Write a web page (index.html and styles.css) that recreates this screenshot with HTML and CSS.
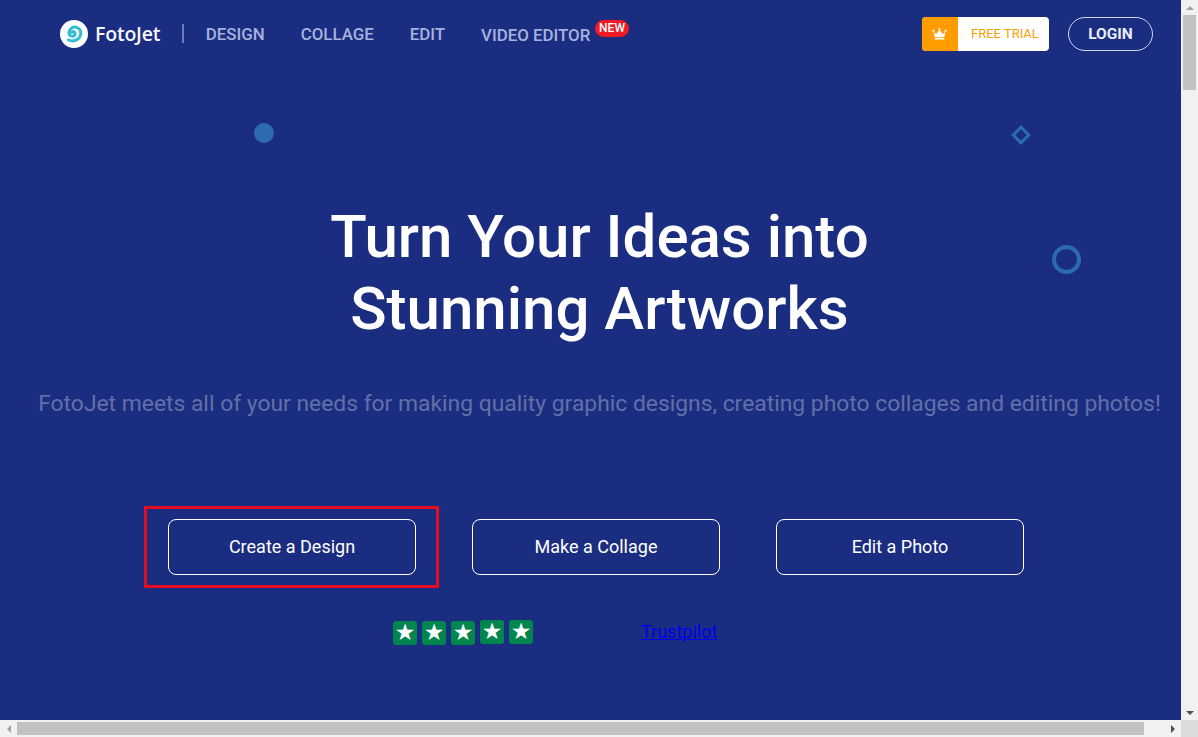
FILE: index.html
```html
<!DOCTYPE html>
<html lang="en">
<head>
<meta charset="utf-8">
<title>FotoJet</title>
<link rel="stylesheet" href="styles.css">
</head>
<body>
<div class="window">
  <div class="viewport">
    <main class="page">
      <header class="nav">
        <a class="brand">
          <svg class="brand-mark" viewBox="0 0 28 28" width="28" height="28" aria-hidden="true">
            <circle cx="14" cy="14" r="14" fill="#fff"/>
            <path d="M8.5 20 C14 22.8 21.2 18.8 20.8 12.5 C20.4 8 15.4 5.8 11.6 8 C8.4 10 8.2 14.6 11 16 C13.5 17.1 15.8 14.8 15 12.8 C14.5 11.6 13 11.2 12 12.2" fill="none" stroke="#34bccf" stroke-width="3" stroke-linecap="round"/>
          </svg>
          <span class="brand-name">FotoJet</span>
        </a>
        <span class="nav-divider"></span>
        <nav class="nav-links">
          <a class="nav-link">DESIGN</a>
          <a class="nav-link">COLLAGE</a>
          <a class="nav-link">EDIT</a>
          <a class="nav-link nav-link-video">VIDEO EDITOR<span class="badge-new">NEW</span></a>
        </nav>
        <div class="nav-actions">
          <a class="trial">
            <span class="trial-icon">
              <svg viewBox="0 0 16 13" width="15" height="12" aria-hidden="true">
                <path d="M1.6 4.2 L4.5 6.4 L8 1.6 L11.5 6.4 L14.4 4.2 L13.2 10 L2.8 10 Z" fill="#fff"/>
                <circle cx="1.4" cy="3" r="1.2" fill="#fff"/>
                <circle cx="8" cy="1.2" r="1.2" fill="#fff"/>
                <circle cx="14.6" cy="3" r="1.2" fill="#fff"/>
                <rect x="2.9" y="10.8" width="10.2" height="1.7" fill="#fff"/>
              </svg>
            </span>
            <span class="trial-label">FREE TRIAL</span>
          </a>
          <a class="login">LOGIN</a>
        </div>
      </header>

      <section class="hero">
        <span class="deco deco-dot"></span>
        <span class="deco deco-diamond"></span>
        <span class="deco deco-ring"></span>
        <h1 class="hero-title">Turn Your Ideas into<br>Stunning Artworks</h1>
        <p class="hero-sub">FotoJet meets all of your needs for making quality graphic designs, creating photo collages and editing photos!</p>
        <div class="cta-row">
          <a class="cta cta-marked">Create a Design<span class="cta-highlight"></span></a>
          <a class="cta">Make a Collage</a>
          <a class="cta">Edit a Photo</a>
        </div>
        <div class="rating">
          <div class="stars">
            <span class="star">★</span><span class="star">★</span><span class="star">★</span><span class="star star-up">★</span><span class="star star-up">★</span>
          </div>
          <a class="trustpilot" href="#">Trustpilot</a>
        </div>
      </section>
    </main>
    <div class="scroll-v">
      <span class="arrow arrow-up"></span>
      <span class="thumb-v"></span>
      <span class="track-fill"></span>
      <span class="arrow arrow-down"></span>
    </div>
  </div>
  <div class="scroll-h">
    <div class="scroll-h-bar">
      <span class="arrow arrow-left"></span>
      <span class="thumb-h"></span>
      <span class="track-fill"></span>
      <span class="arrow arrow-right"></span>
    </div>
    <span class="corner"></span>
  </div>
</div>
</body>
</html>
```

FILE: styles.css
```css
* { box-sizing: border-box; }

html, body {
  margin: 0;
  height: 100%;
  overflow: hidden;
}

body {
  font-family: Roboto, "Liberation Sans", sans-serif;
  background: #1b2d80;
}

.window {
  display: flex;
  flex-direction: column;
  width: 1198px;
  height: 737px;
}

.viewport {
  display: flex;
  height: 720px;
}

.page {
  width: 1181px;
  height: 720px;
  overflow: hidden;
  background: #1b2d80;
  color: #fff;
}

/* nav */
.nav {
  display: flex;
  align-items: center;
  width: 1181px;
  height: 67px;
  padding: 0 28px 0 60px;
}

.brand {
  display: flex;
  align-items: center;
  gap: 7px;
}

.brand-mark { display: block; }

.brand-name {
  font-family: "Open Sans", sans-serif;
  font-size: 19.5px;
  font-weight: 600;
  letter-spacing: -0.2px;
  color: #f4f6fc;
}

.nav-divider {
  width: 2px;
  height: 19px;
  margin: 0 21.5px 0 22px;
  background: #6d7dbb;
}

.nav-links {
  display: flex;
  align-items: center;
  gap: 36px;
}

.nav-link {
  position: relative;
  font-size: 16.85px;
  font-weight: 500;
  line-height: 20px;
  color: #a6b2de;
}

.nav-link-video {
  top: 1px;
  margin-right: 38px;
}

.badge-new {
  position: absolute;
  left: 114px;
  top: -5px;
  width: 34px;
  height: 17px;
  border-radius: 9px;
  background: #ef1b25;
  color: #fff;
  font-size: 12px;
  font-weight: 500;
  line-height: 16px;
  text-align: center;
}

.nav-actions {
  display: flex;
  align-items: center;
  gap: 19px;
  margin-left: auto;
}

.trial {
  display: flex;
  width: 127px;
  height: 34px;
  border-radius: 4px;
  overflow: hidden;
  background: #fff;
}

.trial-icon {
  display: flex;
  align-items: center;
  justify-content: center;
  width: 36px;
  padding-right: 2px;
  background: #ff9d00;
}

.trial-label {
  flex: 1;
  padding-left: 13px;
  font-size: 13px;
  line-height: 33px;
  color: #f29f05;
}

.login {
  width: 85px;
  height: 34px;
  border: 1px solid #cfd6f0;
  border-radius: 17px;
  font-size: 15.5px;
  font-weight: 700;
  line-height: 32px;
  text-align: center;
  color: #e9edfa;
}

/* hero */
.hero {
  position: relative;
  display: flex;
  flex-direction: column;
  height: 653px;
}

.deco { position: absolute; }

.deco-dot {
  left: 254px;
  top: 56px;
  width: 20px;
  height: 20px;
  border-radius: 50%;
  background: #2c6bae;
}

.deco-diamond {
  left: 1014px;
  top: 61px;
  width: 14px;
  height: 14px;
  border: 3px solid #2c6bae;
  transform: rotate(45deg);
}

.deco-ring {
  left: 1052px;
  top: 178px;
  width: 29px;
  height: 29px;
  border: 4px solid #2c6bae;
  border-radius: 50%;
}

.hero-title {
  width: 1199px;
  margin: 134px 0 0;
  font-size: 60px;
  font-weight: 500;
  line-height: 72px;
  text-align: center;
  color: #fff;
}

.hero-sub {
  width: 1199px;
  margin: 43px 0 0;
  font-size: 22.85px;
  line-height: 32px;
  text-align: center;
  white-space: nowrap;
  color: #636fa8;
}

.cta-row {
  display: flex;
  gap: 56px;
  margin: 99px 0 0 168px;
}

.cta {
  position: relative;
  width: 248px;
  height: 56px;
  border: 1px solid #fff;
  border-radius: 8px;
  font-size: 18px;
  line-height: 54px;
  text-align: center;
  color: #fff;
}

.cta-highlight {
  position: absolute;
  left: -25px;
  top: -14px;
  width: 295px;
  height: 82px;
  border: 3px solid #e60d22;
}

.rating {
  display: flex;
  align-items: center;
  margin: 46px 0 0 393px;
}

.stars {
  display: flex;
  gap: 5px;
  width: 248px;
}

.star {
  position: relative;
  width: 24px;
  height: 24px;
  border-radius: 3px;
  background: #00854f;
  color: #fff;
  font-family: "DejaVu Sans", sans-serif;
  font-size: 23px;
  line-height: 23px;
  text-align: center;
}

.star-up { top: -1px; }

.trustpilot {
  position: relative;
  top: -1px;
  font-size: 18px;
  line-height: 24px;
  color: #0000ee;
}

/* scrollbars */
.scroll-v {
  display: flex;
  flex-direction: column;
  align-items: center;
  width: 17px;
  height: 720px;
  background: #f1f1f1;
}

.thumb-v {
  width: 13px;
  height: 75px;
  background: #c1c1c1;
}

.track-fill { flex: 1; }

.arrow {
  flex: none;
  display: block;
  width: 0;
  height: 0;
}

.arrow-up {
  margin: 6px 0 5px;
  border-left: 4px solid transparent;
  border-right: 4px solid transparent;
  border-bottom: 4px solid #a3a3a3;
  border-top: 0;
  height: 0;
}

.arrow-down {
  margin: 6px 0 5px;
  border-left: 4px solid transparent;
  border-right: 4px solid transparent;
  border-top: 4px solid #505050;
}

.scroll-h {
  display: flex;
  height: 17px;
}

.scroll-h-bar {
  display: flex;
  align-items: center;
  width: 1181px;
  background: #f1f1f1;
}

.thumb-h {
  width: 1127px;
  height: 13px;
  background: #c1c1c1;
}

.arrow-left {
  margin: 0 6px 0 7px;
  border-top: 4px solid transparent;
  border-bottom: 4px solid transparent;
  border-right: 4px solid #a3a3a3;
}

.arrow-right {
  margin: 0 6px 0 7px;
  border-top: 4px solid transparent;
  border-bottom: 4px solid transparent;
  border-left: 4px solid #505050;
}

.corner {
  width: 17px;
  background: #dcdcdc;
}
```
